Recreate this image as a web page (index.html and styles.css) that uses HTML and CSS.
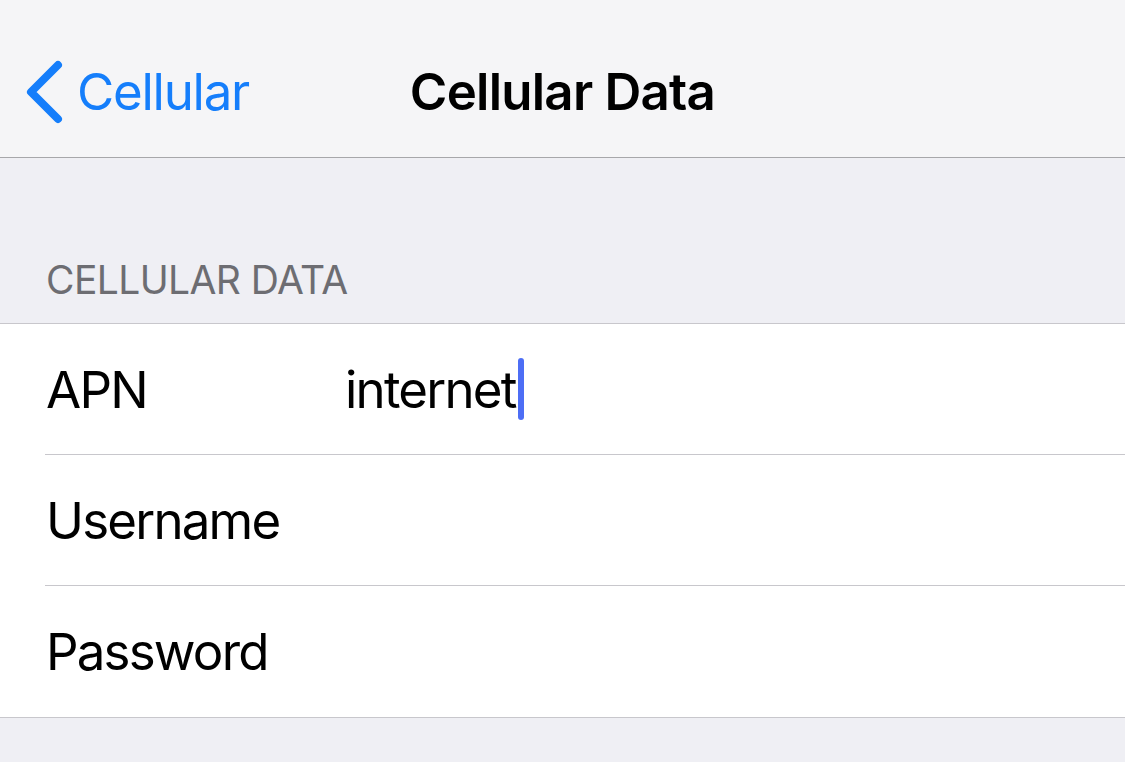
FILE: index.html
```html
<!DOCTYPE html>
<html lang="en">
<head>
    <meta charset="UTF-8">
    <meta name="viewport" content="width=device-width, initial-scale=1.0">
    <title>Cellular Data</title>
    <link rel="stylesheet" href="styles.css">
</head>
<body>
    <header class="nav-bar">
        <a class="back-link" href="#">
            <svg class="back-chevron" viewBox="0 0 44 72" width="44" height="72">
                <path d="M36 9 L9 36 L36 63" fill="none" stroke="currentColor" stroke-width="8" stroke-linecap="round" stroke-linejoin="round"/>
            </svg>
            <span>Cellular</span>
        </a>
        <h1>Cellular Data</h1>
        <div class="nav-spacer"></div>
    </header>

    <main class="settings">
        <div class="section-header">Cellular Data</div>
        <div class="group">
            <div class="row">
                <label for="apn">APN</label>
                <div class="value">
                    <span class="value-text">internet</span><span class="cursor"></span>
                </div>
            </div>
            <div class="row">
                <label for="username">Username</label>
                <div class="value"></div>
            </div>
            <div class="row">
                <label for="password">Password</label>
                <div class="value"></div>
            </div>
        </div>
    </main>
</body>
</html>
```

FILE: styles.css
```css
:root {
    --ios-blue: #157efb;
    --nav-bg: #f5f5f7;
    --group-bg: #efeff4;
    --separator: #c8c7cc;
    --nav-border: #a7a7aa;
    --header-text: #6d6d72;
    --cursor: #4d6ef5;
}

* {
    margin: 0;
    padding: 0;
    box-sizing: border-box;
}

body {
    font-family: Inter, "Noto Sans", "Liberation Sans", sans-serif;
    background: var(--group-bg);
    color: #000;
    width: 1125px;
    height: 762px;
    overflow: hidden;
}

.nav-bar {
    height: 158px;
    padding-top: 26px;
    background: var(--nav-bg);
    border-bottom: 1px solid var(--nav-border);
    display: grid;
    grid-template-columns: 1fr auto 1fr;
    align-items: center;
}

.back-link {
    display: flex;
    align-items: center;
    color: var(--ios-blue);
    text-decoration: none;
    font-size: 51px;
    letter-spacing: -1.25px;
    padding-left: 22px;
}

.back-chevron {
    display: block;
    margin-right: 11px;
}

h1 {
    font-size: 51px;
    font-weight: 600;
    letter-spacing: -0.75px;
}

.settings {
    padding-top: 98px;
}

.section-header {
    text-transform: uppercase;
    color: var(--header-text);
    font-size: 39px;
    letter-spacing: -0.6px;
    padding: 0 0 20px 46px;
}

.group {
    background: #fff;
    border-top: 1px solid var(--separator);
    border-bottom: 1px solid var(--separator);
    padding-left: 45px;
}

.row {
    height: 131px;
    display: flex;
    align-items: center;
    font-size: 51px;
    letter-spacing: -1.8px;
    border-bottom: 1px solid var(--separator);
}

.row:last-child {
    border-bottom: none;
}

.row label {
    width: 300px;
    padding-left: 1px;
}

.value {
    display: flex;
    align-items: center;
}

.cursor {
    display: inline-block;
    width: 6px;
    height: 62px;
    border-radius: 3px;
    background: var(--cursor);
    margin-left: 2px;
}
```
